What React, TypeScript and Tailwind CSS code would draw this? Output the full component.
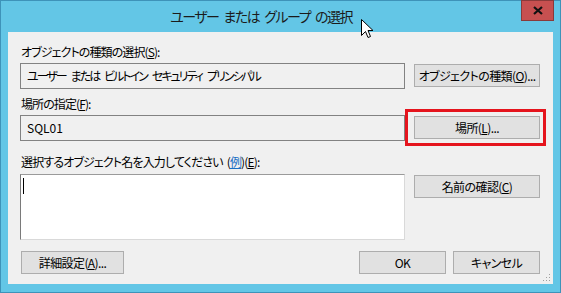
import React from "react";

const font = "font-['Noto_Sans_CJK_JP','Noto_Sans',sans-serif] [font-feature-settings:'palt']";

function Btn({ children, className = "" }: { children: React.ReactNode; className?: string }) {
  return (
    <div
      className={`flex h-[23px] items-center justify-center whitespace-nowrap border border-[#adadad] bg-[#e1e1e1] text-[12px] leading-none tracking-[-0.6px] text-black ${className}`}
    >
      {children}
    </div>
  );
}

function ReadBox({ children, className = "" }: { children: React.ReactNode; className?: string }) {
  return (
    <div
      className={`flex h-[26px] w-[385px] items-center whitespace-nowrap border border-[#828282] bg-[#f0f0f0] pl-[6px] text-[12px] leading-none text-black ${className}`}
    >
      {children}
    </div>
  );
}

export default function App() {
  const boxWords = ["ユーザー", "または", "ビルトイン", "セキュリティ", "プリンシパル"];
  const titleWords = ["ユーザー", "または", "グループ", "の選択"];
  return (
    <div className={`relative flex h-[293px] w-[561px] flex-col border border-[#3e93b9] bg-[#63c6e6] ${font}`}>
      {/* title bar */}
      <div className="flex h-[31px] items-start">
        <div className="flex h-[31px] flex-1 items-center justify-center gap-[5px] whitespace-nowrap text-[14px] tracking-[-1.5px] text-[#1b1b1b]">
          {titleWords.map((w) => (
            <span key={w}>{w}</span>
          ))}
        </div>
        <div className="mr-[6px] -mt-px flex h-[21px] w-[33px] items-center justify-center border border-[#8a3a3a] bg-[#c75050]">
          <svg width="10" height="9" viewBox="0 0 10 9">
            <path d="M1 1 L9 8 M9 1 L1 8" stroke="#111" strokeWidth="2.2" />
          </svg>
        </div>
      </div>

      {/* content */}
      <div className="relative mx-[7px] flex flex-1 flex-col bg-[#f0f0f0] pl-[12px] pr-[13px] pt-[12px] text-black">
        <div className="h-[16px] whitespace-nowrap pl-px text-[12px] leading-[16px] tracking-[-0.9px]">
          オブジェクトの種類の選択(<u>S</u>):
        </div>
        <div className="mt-[3px] flex gap-[9px]">
          <ReadBox className="gap-[5px] tracking-[-2px]">
            {boxWords.map((w) => (
              <span key={w}>{w}</span>
            ))}
          </ReadBox>
          <Btn className="mt-px w-[126px]">
            オブジェクトの種類(<u>O</u>)...
          </Btn>
        </div>

        <div className="mt-[7px] h-[16px] whitespace-nowrap pl-px text-[12px] leading-[16px] tracking-[-0.9px]">
          場所の指定(<u>F</u>):
        </div>
        <div className="mt-[3px] flex gap-[9px]">
          <ReadBox>SQL01</ReadBox>
          <div className="relative mt-px h-[23px] w-[126px]">
            <Btn className="w-[126px]">
              場所(<u>L</u>)...
            </Btn>
            <div className="absolute -bottom-[7px] -left-[9px] -right-[6px] -top-[7px] border-[3px] border-[#e5141d]" />
          </div>
        </div>

        <div className="mt-[13px] h-[16px] whitespace-nowrap pl-px text-[12px] leading-[16px] tracking-[-0.85px]">
          選択するオブジェクト名を入力してください<span className="inline-block w-[4px]" />(<span className="text-[#1a6fc4] underline">例</span>)(<u>E</u>):
        </div>
        <div className="mt-[4px] flex gap-[9px]">
          <div className="relative h-[66px] w-[385px] border border-b-[#d9d9d9] border-l-[#7a7a7a] border-r-[#d9d9d9] border-t-[#9a9a9a] bg-white">
            <div className="absolute left-[2px] top-[3px] h-[16px] w-px bg-black" />
          </div>
          <Btn className="mt-px w-[126px]">
            名前の確認(<u>C</u>)
          </Btn>
        </div>

        <div className="mt-[11px] flex">
          <Btn className="ml-px w-[103px]">
            詳細設定(<u>A</u>)...
          </Btn>
          <div className="flex-1" />
          <Btn className="w-[87px]">OK</Btn>
          <Btn className="ml-[7px] w-[87px]">キャンセル</Btn>
        </div>

        {/* resize grip */}
        <svg className="absolute bottom-[2px] right-[2px]" width="10" height="10" viewBox="0 0 10 10">
          {[
            [8, 2],
            [8, 5],
            [5, 5],
            [8, 8],
            [5, 8],
            [2, 8],
          ].map(([x, y], i) => (
            <rect key={i} x={x} y={y} width="1" height="1" fill="#a0a0a0" />
          ))}
        </svg>
      </div>
      <div className="h-[8px]" />

      {/* mouse cursor */}
      <svg className="absolute left-[360px] top-[18px]" width="13" height="20" viewBox="0 0 13 20">
        <path
          d="M0.5 0.5 L0.5 16.5 L4.5 12.5 L7 18.5 L9.5 17.5 L7 11.5 L12 11.5 Z"
          fill="white"
          stroke="black"
          strokeWidth="1"
        />
      </svg>
    </div>
  );
}
